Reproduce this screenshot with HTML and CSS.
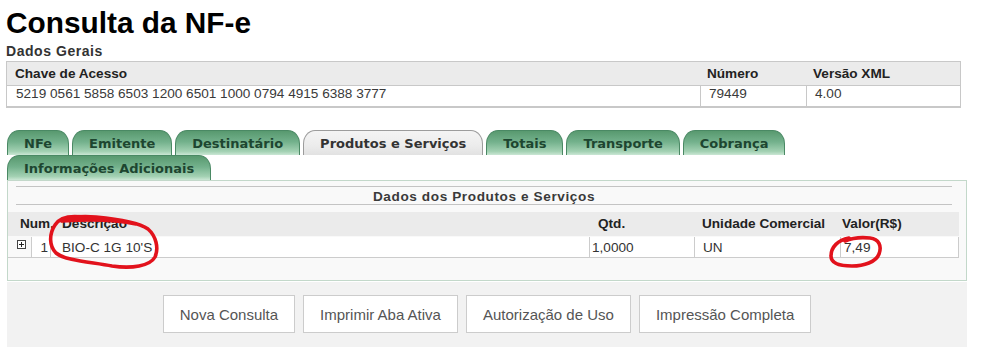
FILE: index.html
```html
<!DOCTYPE html>
<html lang="pt-BR">
<head>
<meta charset="utf-8">
<title>Consulta da NF-e</title>
<link rel="stylesheet" href="styles.css">
</head>
<body>
<h1 class="title">Consulta da NF-e</h1>
<div class="label">Dados Gerais</div>
<div class="info">
  <div class="info-head">
    <div class="ic">Chave de Acesso</div>
    <div class="ic">Número</div>
    <div class="ic">Versão XML</div>
  </div>
  <div class="info-row">
    <div class="ic">5219 0561 5858 6503 1200 6501 1000 0794 4915 6388 3777</div>
    <div class="ic">79449</div>
    <div class="ic">4.00</div>
  </div>
</div>

<div class="tabs">
  <div class="tab">NFe</div>
  <div class="tab">Emitente</div>
  <div class="tab">Destinatário</div>
  <div class="tab active">Produtos e Serviços</div>
  <div class="tab">Totais</div>
  <div class="tab">Transporte</div>
  <div class="tab">Cobrança</div>
  <div class="tab">Informações Adicionais</div>
</div>

<div class="panel">
  <div class="panel-title">Dados dos Produtos e Serviços</div>
  <div class="grid-head">
    <div class="gh gh-num">Num.</div>
    <div class="gh gh-desc">Descrição</div>
    <div class="gh">Qtd.</div>
    <div class="gh">Unidade Comercial</div>
    <div class="gh">Valor(R$)</div>
  </div>
  <div class="grid-row">
    <div class="gc-icon">
      <svg class="plus" width="9" height="9" viewBox="0 0 9 9"><rect x="0.5" y="0.5" width="8" height="8" fill="#fff" stroke="#444"/><path d="M2 4.5h5M4.5 2v5" stroke="#222" stroke-width="1"/></svg>
    </div>
    <div class="gc gc-num">1</div>
    <div class="gc gc-desc">BIO-C 1G 10'S</div>
    <div class="gc gc-qtd">1,0000</div>
    <div class="gc gc-unid">UN</div>
    <div class="gc gc-val">7,49</div>
  </div>
</div>

<div class="actions">
  <button class="btn">Nova Consulta</button>
  <button class="btn">Imprimir Aba Ativa</button>
  <button class="btn">Autorização de Uso</button>
  <button class="btn">Impressão Completa</button>
</div>

<svg class="marks" width="985" height="356" viewBox="0 0 985 356">
  <path d="M88 218 C72 215 60 217 55 225 C49 234 49 246 56 253 C66 261 92 262 112 266 C132 269 150 266 155 257 C159 248 156 236 148 229 C138 222 118 219 96 217 C82 216 70 216 62 221 M62 221 C90 219 118 220 136 224" fill="none" stroke="#e2121c" stroke-width="3.6" stroke-linecap="round" stroke-linejoin="round"/>
  <path d="M849 238 C838 240 831 247 831 256 C831 264 840 266 852 266 C864 266 876 262 879 254 C882 246 879 239 870 238 C861 237 852 238 845 241" fill="none" stroke="#e2121c" stroke-width="3.6" stroke-linecap="round" stroke-linejoin="round"/>
</svg>
</body>
</html>
```

FILE: styles.css
```css
html, body {
  margin: 0;
  padding: 0;
  background: #ffffff;
}

body {
  position: relative;
  width: 985px;
  height: 356px;
  overflow: hidden;
  font-family: "Liberation Sans", Arial, sans-serif;
  color: #222;
}

.title {
  margin: 6px 0 0 6px;
  font-size: 29.8px;
  line-height: 34px;
  font-weight: bold;
  color: #000;
}

.label {
  margin: 3px 0 0 6px;
  font-size: 14px;
  letter-spacing: 0.55px;
  line-height: 17px;
  font-weight: bold;
  color: #333;
}

.info {
  margin: 1px 0 0 6px;
  width: 953px;
  border: 1px solid #c8c8c8;
  border-bottom-width: 2px;
}

.info-head,
.info-row {
  display: grid;
  grid-template-columns: 693px 106px 1fr;
}

.info-head {
  height: 23px;
  background: #ebebeb;
  border-bottom: 1px solid #c8c8c8;
  font-weight: bold;
  font-size: 13.6px;
  line-height: 23px;
  color: #222;
}

.info-head .ic {
  padding-left: 8px;
}

.info-head .ic + .ic {
  padding-left: 7px;
}

.info-row {
  height: 20px;
  background: #fff;
  font-size: 13.6px;
  line-height: 16px;
  color: #3a3a3a;
}

.info-row .ic {
  padding-left: 9px;
}

.info-row .ic + .ic {
  border-left: 1px solid #c8c8c8;
  padding-left: 8px;
}

.tabs {
  display: flex;
  flex-wrap: wrap;
  margin: 22px 0 0 7px;
  width: 960px;
  row-gap: 0;
}

.tab {
  box-sizing: border-box;
  height: 25px;
  margin-right: 3px;
  padding: 3px 16px 0;
  border: 1px solid #4a8964;
  border-bottom: none;
  border-radius: 12px 12px 0 0 / 14px 14px 0 0;
  background: linear-gradient(to bottom, #58996f 0%, #73b18c 45%, #a3d1b3 85%, #cbe7d5 100%);
  font-family: "DejaVu Sans", Verdana, sans-serif;
  font-weight: bold;
  font-size: 13px;
  line-height: 20px;
  color: #1d4630;
  white-space: nowrap;
}

.tab.active {
  border-color: #9c9c9c;
  background: linear-gradient(to bottom, #f4f4f4 0%, #ececec 60%, #e2e2e2 100%);
  color: #333;
}

.panel {
  box-sizing: border-box;
  margin-left: 7px;
  width: 960px;
  border: 1px solid #c3d8ca;
  background: #f9f9f9;
  padding: 5px 7px 22px 0;
}

.panel-title {
  margin: 0 7px 0 8px;
  border-top: 1px solid #c4c4c4;
  border-bottom: 1px solid #c4c4c4;
  padding-top: 3px;
  box-sizing: content-box;
  height: 14px;
  line-height: 14px;
  text-align: center;
  font-size: 13.6px;
  font-weight: bold;
  letter-spacing: 0.6px;
  color: #3a3a3a;
}

.grid-head,
.grid-row {
  display: grid;
}

.grid-head {
  margin-top: 7px;
  grid-template-columns: 42px 540px 104px 140px 1fr;
  height: 24px;
  background: #ebebeb;
  font-size: 13.6px;
  font-weight: bold;
  line-height: 24px;
  color: #222;
}

.gh {
  padding-left: 8px;
  white-space: nowrap;
}

.gh-num,
.gh-desc {
  padding-left: 12px;
}

.grid-row {
  margin-top: 1px;
  grid-template-columns: 23px 19px 539px 105px 146px 1fr;
  height: 20px;
  border-bottom: 1px solid #cccccc;
  font-size: 13.6px;
  line-height: 19px;
  color: #333;
}

.gc-icon {
  padding: 3px 0 0 9px;
}

.plus {
  display: block;
}

.gc {
  padding-top: 1px;
  background: #fff;
  border-left: 1px solid #cccccc;
  white-space: nowrap;
}

.gc-val {
  border-right: 1px solid #cccccc;
  padding-left: 3px;
}

.gc-num {
  text-align: right;
  padding-right: 2px;
}

.gc-desc {
  padding-left: 11px;
}

.gc-qtd {
  padding-left: 2px;
}

.gc-unid {
  padding-left: 8px;
}

.actions {
  box-sizing: border-box;
  margin: 1px 0 0 7px;
  width: 960px;
  height: 65px;
  background: #f2f2f2;
  padding-top: 13px;
  display: flex;
  justify-content: center;
  gap: 8px;
}

.btn {
  box-sizing: border-box;
  height: 38px;
  padding: 0 16px;
  border: 1px solid #cccccc;
  background: #fff;
  font-family: "Liberation Sans", Arial, sans-serif;
  font-size: 15px;
  color: #555;
}

.marks {
  position: absolute;
  left: 0;
  top: 0;
  pointer-events: none;
}
```
